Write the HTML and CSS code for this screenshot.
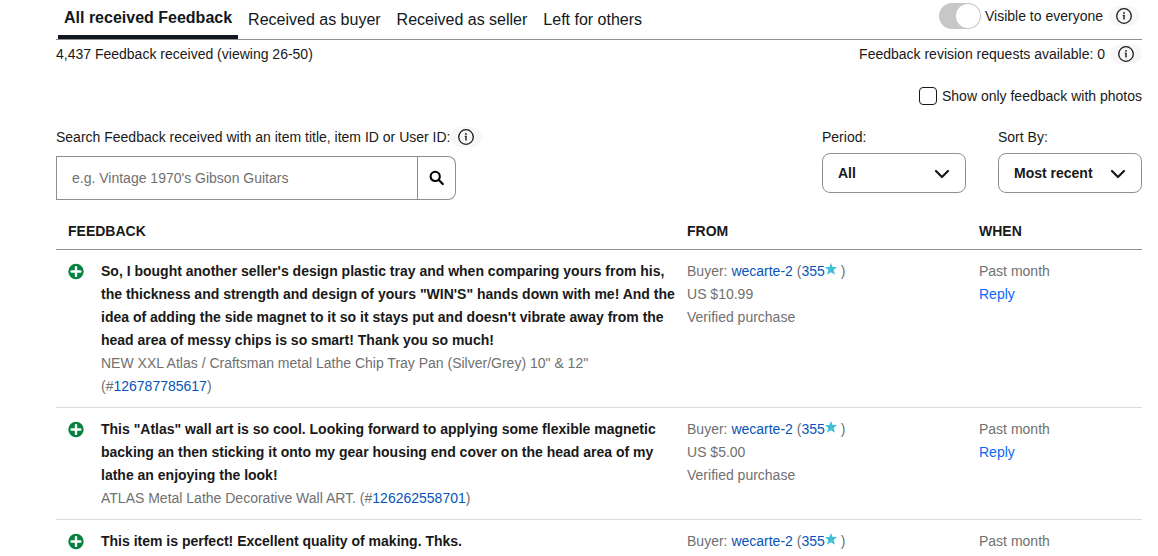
FILE: index.html
```
<!DOCTYPE html>
<html lang="en">
<head>
<meta charset="utf-8">
<title>Feedback profile</title>
<meta name="viewport" content="width=device-width, initial-scale=1.0">
<link rel="stylesheet" href="styles.css">
</head>
<body>
<svg class="sprite" aria-hidden="true">
	<symbol id="icon-info" viewBox="0 0 16 16">
		<circle cx="8" cy="8" r="7.3" fill="none" stroke="currentColor" stroke-width="1.3"/>
		<circle cx="8" cy="4.9" r=".9" fill="currentColor"/>
		<path d="M6.8 7.4H8v4.2" fill="none" stroke="currentColor" stroke-width="1.4"/>
	</symbol>
	<symbol id="icon-search" viewBox="0 0 16 16">
		<circle cx="6.2" cy="6.4" r="4.6" fill="none" stroke="currentColor" stroke-width="2.1"/>
		<path d="M9.8 10l4 4" fill="none" stroke="currentColor" stroke-width="2.2" stroke-linecap="round"/>
	</symbol>
	<symbol id="icon-chevron" viewBox="0 0 16 16">
		<path d="M2 5l6 6 6-6" fill="none" stroke="currentColor" stroke-width="2.2" stroke-linecap="round" stroke-linejoin="round"/>
	</symbol>
	<symbol id="icon-positive" viewBox="0 0 16 16">
		<circle cx="8" cy="8" r="7.7" fill="#05823f"/>
		<path d="M8 3.6v8.8M3.6 8h8.8" stroke="#fff" stroke-width="2.4" stroke-linecap="round"/>
	</symbol>
	<symbol id="icon-star" viewBox="0 0 12 12">
		<path d="M6 0l1.6 4.1H12L8.6 7l1.4 4.8L6 9.2l-4 2.6L3.4 7 0 4.1h4.4z" fill="#40bfd9"/>
	</symbol>
</svg>
<main class="feedback">
	<header class="topbar">
		<nav class="tabs">
			<a class="tab active" href="#all">All received Feedback</a>
			<a class="tab" href="#buyer">Received as buyer</a>
			<a class="tab" href="#seller">Received as seller</a>
			<a class="tab" href="#left">Left for others</a>
		</nav>
		<div class="visibility">
			<label class="switch-label"><input class="switch" type="checkbox" checked disabled> Visible to everyone</label>
			<button class="info" type="button" aria-label="About visibility"><svg><use href="#icon-info"/></svg></button>
		</div>
	</header>
	<div class="summary">
		<span>4,437 Feedback received (viewing 26-50)</span>
		<div class="revisions">
			<span>Feedback revision requests available: 0</span>
			<button class="info" type="button" aria-label="About revision requests"><svg><use href="#icon-info"/></svg></button>
		</div>
	</div>
	<label class="photos"><input class="checkbox" type="checkbox"> Show only feedback with photos</label>
	<div class="filters">
		<form class="search">
			<div class="search-label">
				<label for="search">Search Feedback received with an item title, item ID or User ID:</label>
				<button class="info" type="button" aria-label="About search"><svg><use href="#icon-info"/></svg></button>
			</div>
			<div class="search-box">
				<input id="search" type="text" placeholder="e.g. Vintage 1970's Gibson Guitars">
				<button type="submit" aria-label="Search"><svg><use href="#icon-search"/></svg></button>
			</div>
		</form>
		<div class="selects">
			<div class="field">
				<label for="period">Period:</label>
				<div class="select">
					<select id="period"><option>All</option></select>
					<svg><use href="#icon-chevron"/></svg>
				</div>
			</div>
			<div class="field">
				<label for="sort">Sort By:</label>
				<div class="select">
					<select id="sort"><option>Most recent</option></select>
					<svg><use href="#icon-chevron"/></svg>
				</div>
			</div>
		</div>
	</div>
	<table class="cards">
		<thead>
			<tr>
				<th class="col-feedback">FEEDBACK</th>
				<th class="col-from">FROM</th>
				<th class="col-when">WHEN</th>
			</tr>
		</thead>
		<tbody>
			<tr>
				<td>
					<div class="card">
						<svg class="rating"><use href="#icon-positive"/></svg>
						<div>
							<div class="comment">So, I bought another seller's design plastic tray and when comparing yours from his, the thickness and strength and design of yours "WIN'S" hands down with me! And the idea of adding the side magnet to it so it stays put and doesn't vibrate away from the head area of messy chips is so smart! Thank you so much!</div>
							<div>NEW XXL Atlas / Craftsman metal Lathe Chip Tray Pan (Silver/Grey) 10" &amp; 12" (#<a href="#126787785617">126787785617</a>)</div>
						</div>
					</div>
				</td>
				<td>
					<div>Buyer: <a href="#wecarte-2">wecarte-2</a> (<a href="#score">355<svg class="star"><use href="#icon-star"/></svg></a> )</div>
					<div>US $10.99</div>
					<div>Verified purchase</div>
				</td>
				<td>
					<div>Past month</div>
					<a class="reply" href="#reply">Reply</a>
				</td>
			</tr>
			<tr>
				<td>
					<div class="card">
						<svg class="rating"><use href="#icon-positive"/></svg>
						<div>
							<div class="comment">This "Atlas" wall art is so cool. Looking forward to applying some flexible magnetic backing an then sticking it onto my gear housing end cover on the head area of my lathe an enjoying the look!</div>
							<div>ATLAS Metal Lathe Decorative Wall ART. (#<a href="#126262558701">126262558701</a>)</div>
						</div>
					</div>
				</td>
				<td>
					<div>Buyer: <a href="#wecarte-2">wecarte-2</a> (<a href="#score">355<svg class="star"><use href="#icon-star"/></svg></a> )</div>
					<div>US $5.00</div>
					<div>Verified purchase</div>
				</td>
				<td>
					<div>Past month</div>
					<a class="reply" href="#reply">Reply</a>
				</td>
			</tr>
			<tr>
				<td>
					<div class="card">
						<svg class="rating"><use href="#icon-positive"/></svg>
						<div class="comment">This item is perfect! Excellent quality of making. Thks.</div>
					</div>
				</td>
				<td>Buyer: <a href="#wecarte-2">wecarte-2</a> (<a href="#score">355<svg class="star"><use href="#icon-star"/></svg></a> )</td>
				<td>Past month</td>
			</tr>
		</tbody>
	</table>
</main>
</body>
</html>
```
FILE: styles.css
```
*{
	box-sizing: border-box;
}
body{
	margin: 0;
	background: #fff;
	color: #191919;
	font: 14px/20px 'Liberation Sans', Arial, sans-serif;
}
a{
	color: #0654ba;
	text-decoration: none;
}
button,
input,
select{
	margin: 0;
	font: inherit;
	color: inherit;
}
.sprite{
	display: none;
}
.feedback{
	padding: 0 16px 0 56px;
}

/* tabs */
.topbar{
	display: flex;
	justify-content: space-between;
	height: 40px;
	border-bottom: 1px solid #8f8f8f;
}
.tabs{
	display: flex;
	gap: 16px;
	padding-left: 2px;
}
.tab{
	padding-top: 10px;
	color: #111820;
	font-size: 16px;
}
.tab.active{
	margin-right: -6px;
	padding: 8px 6px 0;
	border-bottom: 4px solid #111820;
	font-weight: bold;
}
.visibility{
	display: flex;
	align-items: center;
	gap: 5px;
	height: 32px;
	padding-right: 2px;
}
.switch-label{
	display: flex;
	align-items: center;
	gap: 4px;
}
.switch{
	appearance: none;
	display: flex;
	justify-content: flex-end;
	width: 42px;
	height: 26px;
	padding: 1px;
	border-radius: 13px;
	background: #c7c7c7;
}
.switch::before{
	content: '';
	width: 24px;
	height: 24px;
	border-radius: 50%;
	background: #fff;
}
.info{
	display: flex;
	flex: none;
	align-items: center;
	justify-content: center;
	width: 32px;
	height: 20px;
	padding: 0;
	border: 0;
	border-radius: 10px;
	background: #f7f7f7;
}
.info svg{
	width: 16px;
	height: 16px;
}

.summary{
	display: flex;
	justify-content: space-between;
	padding-top: 4px;
}
.revisions{
	display: flex;
	align-items: center;
	gap: 5px;
}
.photos{
	display: flex;
	align-items: center;
	justify-content: flex-end;
	gap: 5px;
	margin-top: 22px;
}
.checkbox{
	appearance: none;
	width: 18px;
	height: 18px;
	border: 1px solid #191919;
	border-radius: 4px;
}

/* search and sorting */
.filters{
	display: flex;
	justify-content: space-between;
	margin-top: 21px;
}
.search-label{
	display: flex;
	align-items: center;
	white-space: nowrap;
}
.search-box{
	display: flex;
	width: 400px;
	height: 44px;
	margin-top: 9px;
}
.search-box input{
	flex: 1;
	min-width: 0;
	padding: 0 15px;
	border: 1px solid #8f8f8f;
}
.search-box input::placeholder{
	color: #707070;
}
.search-box button{
	display: flex;
	align-items: center;
	justify-content: center;
	width: 38px;
	padding: 0;
	border: 1px solid #8f8f8f;
	border-left: 0;
	border-radius: 0 8px 8px 0;
	background: #fff;
	color: #000;
}
.search-box svg{
	width: 16px;
	height: 16px;
}
.selects{
	display: flex;
	gap: 32px;
}
.field label{
	display: block;
}
.select{
	position: relative;
	width: 144px;
	margin-top: 6px;
}
.select select{
	appearance: none;
	display: block;
	width: 100%;
	height: 40px;
	padding: 0 15px;
	border: 1px solid #8f8f8f;
	border-radius: 8px;
	background: #fff;
	font-weight: bold;
}
.select svg{
	position: absolute;
	top: 13px;
	right: 16px;
	width: 16px;
	height: 16px;
	pointer-events: none;
}

/* feedback list */
.cards{
	width: 100%;
	margin-top: 12px;
	border-collapse: collapse;
	table-layout: fixed;
}
.cards th{
	padding: 9px 0 8px 12px;
	border-bottom: 1px solid #8f8f8f;
	text-align: left;
}
.cards td{
	padding: 10px 0 9px 12px;
	border-bottom: 1px solid #dcdcdc;
	color: #707070;
	line-height: 23px;
	vertical-align: top;
}
.cards tr:last-child td{
	padding-bottom: 0;
}
.cards tbody tr:last-child td{
	border-bottom: 0;
}
.cards .col-feedback{
	width: 57%;
}
.cards .col-when{
	width: 175px;
}
.card{
	display: flex;
	gap: 17px;
}
.rating{
	flex: none;
	width: 16px;
	height: 23px;
}
.comment{
	color: #191919;
	font-weight: bold;
}
.star{
	width: 12px;
	height: 12px;
	vertical-align: 1px;
}
.cards .reply{
	color: #0968f6;
}
```
